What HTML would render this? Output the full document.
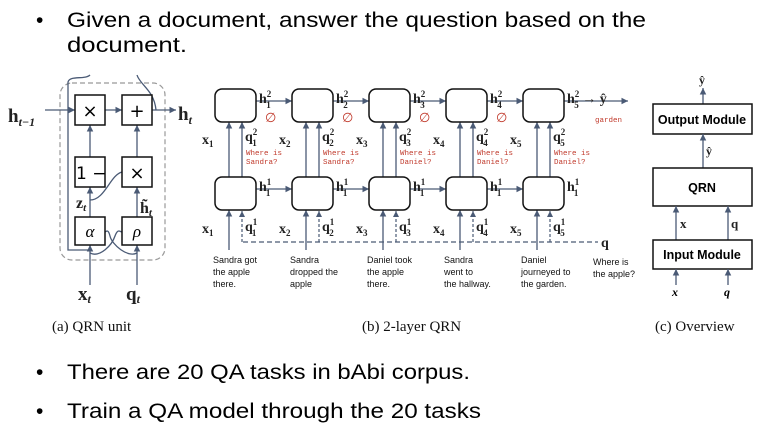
<!DOCTYPE html>
<html><head><meta charset="utf-8"><style>
html,body{margin:0;padding:0;background:#fff;}
svg{display:block;}
.b{font-family:"Liberation Sans",sans-serif;font-size:21px;fill:#000;}
.s{font-family:"Liberation Serif",serif;font-weight:bold;fill:#222;}
.cap{font-family:"Liberation Serif",serif;font-size:15px;fill:#111;}
.m{font-family:"Liberation Mono",monospace;font-size:7.5px;fill:#c0392b;}
.t{font-family:"Liberation Sans",sans-serif;font-size:9px;fill:#111;}
.ln{stroke:#4a5a75;stroke-width:1.3;fill:none;}
.bx{fill:#fff;stroke:#111;stroke-width:1.5;}
.e{font-size:13px;fill:#c0392b;font-family:"DejaVu Sans",sans-serif;}
</style></head><body>
<svg width="769" height="430" viewBox="0 0 769 430" xmlns="http://www.w3.org/2000/svg">
<defs><marker id="a" markerWidth="6" markerHeight="6" refX="5" refY="3" orient="auto"><path d="M0,0.5 L5,3 L0,5.5z" fill="#4a5a75"/></marker></defs>
<text class="b" x="36" y="27">•</text>
<text class="b" x="67" y="27" textLength="579" lengthAdjust="spacingAndGlyphs">Given a document, answer the question based on the</text>
<text class="b" x="67" y="52" textLength="120" lengthAdjust="spacingAndGlyphs">document.</text>
<text class="b" x="36" y="379">•</text>
<text class="b" x="67" y="379" textLength="403" lengthAdjust="spacingAndGlyphs">There are 20 QA tasks in bAbi corpus.</text>
<text class="b" x="36" y="418">•</text>
<text class="b" x="67" y="418" textLength="414" lengthAdjust="spacingAndGlyphs">Train a QA model through the 20 tasks</text>

<!-- (a) QRN unit -->
<rect x="60" y="83" width="105" height="177" rx="12" fill="none" stroke="#999" stroke-width="1.2" stroke-dasharray="5,3"/>
<line class="ln" x1="45" y1="110" x2="75" y2="110" marker-end="url(#a)"/>
<line class="ln" x1="105" y1="110" x2="122" y2="110" marker-end="url(#a)"/>
<line class="ln" x1="152" y1="110" x2="176" y2="110" marker-end="url(#a)"/>
<line class="ln" x1="90" y1="157" x2="90" y2="125" marker-end="url(#a)"/>
<line class="ln" x1="137" y1="157" x2="137" y2="125" marker-end="url(#a)"/>
<line class="ln" x1="90" y1="217" x2="90" y2="187" marker-end="url(#a)"/>
<line class="ln" x1="137" y1="217" x2="137" y2="187" marker-end="url(#a)"/>
<path class="ln" d="M90,200 C105,200 110,175 122,172"/>
<path class="ln" d="M90,250 L68,250 L68,82 C70,75 85,80 90,75"/>
<path class="ln" d="M156,110 C154,90 140,85 137,75"/>
<line class="ln" x1="90" y1="285" x2="90" y2="245" marker-end="url(#a)"/>
<line class="ln" x1="137" y1="285" x2="137" y2="245" marker-end="url(#a)"/>
<path class="ln" d="M90,253 C100,258 112,245 115,236 C118,228 120,232 122,232"/>
<path class="ln" d="M137,253 C128,258 112,245 110,236 C108,228 106,232 105,232"/>
<rect class="bx" x="75" y="95" width="30" height="30"/><text x="90" y="117" font-size="18" text-anchor="middle" font-family="DejaVu Sans">×</text>
<rect class="bx" x="122" y="95" width="30" height="30"/><text x="137" y="117" font-size="18" text-anchor="middle" font-family="DejaVu Sans">+</text>
<rect class="bx" x="75" y="157" width="30" height="30"/><text x="76" y="179" font-size="17" font-family="DejaVu Sans">1 −</text>
<rect class="bx" x="122" y="157" width="30" height="30"/><text x="137" y="179" font-size="18" text-anchor="middle" font-family="DejaVu Sans">×</text>
<rect class="bx" x="75" y="217" width="30" height="28"/><text x="90" y="237" font-size="17" text-anchor="middle" font-family="Liberation Serif" font-style="italic">α</text>
<rect class="bx" x="122" y="217" width="30" height="28"/><text x="137" y="237" font-size="17" text-anchor="middle" font-family="Liberation Serif" font-style="italic">ρ</text>
<text class="s" x="8" y="122" font-size="19">h<tspan font-size="12" dy="4" font-style="italic">t−1</tspan></text>
<text class="s" x="178" y="120" font-size="19">h<tspan font-size="12" dy="4" font-style="italic">t</tspan></text>
<text class="s" x="76" y="208" font-size="16">z<tspan font-size="11" dy="3" font-style="italic">t</tspan></text>
<text class="s" x="140" y="213" font-size="16">h̃<tspan font-size="11" dy="3" font-style="italic">t</tspan></text>
<text class="s" x="78" y="300" font-size="19">x<tspan font-size="12" dy="3" font-style="italic">t</tspan></text>
<text class="s" x="126" y="300" font-size="19">q<tspan font-size="12" dy="3" font-style="italic">t</tspan></text>
<text class="cap" x="52" y="331">(a) QRN unit</text>

<line x1="243" y1="242" x2="598" y2="242" stroke="#4a5a75" stroke-width="1.3" stroke-dasharray="5,3"/>
<text class="s" x="601" y="247" font-size="14">q</text>
<text class="cap" x="362" y="331">(b) 2-layer QRN</text>

<!-- (c) Overview -->
<line class="ln" x1="703" y1="104" x2="703" y2="88" marker-end="url(#a)"/>
<text class="s" x="699" y="84" font-size="12">ŷ</text>
<rect x="653" y="104" width="99" height="30" fill="#fff" stroke="#111" stroke-width="1.5"/>
<text x="702" y="124" font-size="12.5" font-weight="bold" text-anchor="middle" font-family="Liberation Sans">Output Module</text>
<line class="ln" x1="703" y1="168" x2="703" y2="134" marker-end="url(#a)"/>
<text class="s" x="706" y="155" font-size="12">ŷ</text>
<rect x="653" y="168" width="99" height="38" fill="#fff" stroke="#111" stroke-width="1.5"/>
<text x="702" y="192" font-size="12.5" font-weight="bold" text-anchor="middle" font-family="Liberation Sans">QRN</text>
<line class="ln" x1="676" y1="240" x2="676" y2="206" marker-end="url(#a)"/>
<line class="ln" x1="728" y1="240" x2="728" y2="206" marker-end="url(#a)"/>
<text class="s" x="680" y="228" font-size="13">x</text>
<text class="s" x="731" y="228" font-size="13">q</text>
<rect x="653" y="240" width="99" height="29" fill="#fff" stroke="#111" stroke-width="1.5"/>
<text x="702" y="259" font-size="12.5" font-weight="bold" text-anchor="middle" font-family="Liberation Sans">Input Module</text>
<line class="ln" x1="676" y1="285" x2="676" y2="269" marker-end="url(#a)"/>
<line class="ln" x1="728" y1="285" x2="728" y2="269" marker-end="url(#a)"/>
<text x="672" y="296" font-size="12" font-weight="bold" font-style="italic" font-family="Liberation Serif">x</text>
<text x="724" y="296" font-size="12" font-weight="bold" font-style="italic" font-family="Liberation Serif">q</text>
<text class="cap" x="655" y="331">(c) Overview</text>

<g transform="translate(215,0)">
<line class="ln" x1="40" y1="101" x2="77" y2="101" marker-end="url(#a)"/>
<line class="ln" x1="40" y1="189" x2="77" y2="189" marker-end="url(#a)"/>
<line class="ln" x1="14" y1="178" x2="14" y2="122" marker-end="url(#a)"/>
<line class="ln" x1="27" y1="178" x2="27" y2="122" marker-end="url(#a)"/>
<line class="ln" x1="14" y1="250" x2="14" y2="210" marker-end="url(#a)"/>
<line x1="27" y1="242" x2="27" y2="211" stroke="#4a5a75" stroke-width="1.2" stroke-dasharray="3,2" marker-end="url(#a)"/>
<rect class="bx" x="0" y="89" width="41" height="33" rx="7"/>
<rect class="bx" x="0" y="177" width="41" height="33" rx="7"/>
<text class="s" x="44" y="103" font-size="14">h<tspan font-size="9" dy="-6">2</tspan><tspan font-size="9" dx="-5" dy="11">1</tspan></text>
<text class="e" x="50" y="122">∅</text>
<text class="s" x="-13" y="144" font-size="14">x<tspan font-size="9" dy="3">1</tspan></text>
<text class="s" x="30" y="141" font-size="14">q<tspan font-size="9" dy="-6">2</tspan><tspan font-size="9" dx="-5" dy="11">1</tspan></text>
<text class="m" x="31" y="155">Where is</text><text class="m" x="31" y="164">Sandra?</text>
<text class="s" x="44" y="191" font-size="14">h<tspan font-size="9" dy="-6">1</tspan><tspan font-size="9" dx="-5" dy="11">1</tspan></text>
<text class="s" x="-13" y="233" font-size="14">x<tspan font-size="9" dy="3">1</tspan></text>
<text class="s" x="30" y="231" font-size="14">q<tspan font-size="9" dy="-6">1</tspan><tspan font-size="9" dx="-5" dy="11">1</tspan></text>
<text class="t" x="-2" y="263">Sandra got</text><text class="t" x="-2" y="275">the apple</text><text class="t" x="-2" y="287">there.</text>
</g>
<g transform="translate(292,0)">
<line class="ln" x1="40" y1="101" x2="77" y2="101" marker-end="url(#a)"/>
<line class="ln" x1="40" y1="189" x2="77" y2="189" marker-end="url(#a)"/>
<line class="ln" x1="14" y1="178" x2="14" y2="122" marker-end="url(#a)"/>
<line class="ln" x1="27" y1="178" x2="27" y2="122" marker-end="url(#a)"/>
<line class="ln" x1="14" y1="250" x2="14" y2="210" marker-end="url(#a)"/>
<line x1="27" y1="242" x2="27" y2="211" stroke="#4a5a75" stroke-width="1.2" stroke-dasharray="3,2" marker-end="url(#a)"/>
<rect class="bx" x="0" y="89" width="41" height="33" rx="7"/>
<rect class="bx" x="0" y="177" width="41" height="33" rx="7"/>
<text class="s" x="44" y="103" font-size="14">h<tspan font-size="9" dy="-6">2</tspan><tspan font-size="9" dx="-5" dy="11">2</tspan></text>
<text class="e" x="50" y="122">∅</text>
<text class="s" x="-13" y="144" font-size="14">x<tspan font-size="9" dy="3">2</tspan></text>
<text class="s" x="30" y="141" font-size="14">q<tspan font-size="9" dy="-6">2</tspan><tspan font-size="9" dx="-5" dy="11">2</tspan></text>
<text class="m" x="31" y="155">Where is</text><text class="m" x="31" y="164">Sandra?</text>
<text class="s" x="44" y="191" font-size="14">h<tspan font-size="9" dy="-6">1</tspan><tspan font-size="9" dx="-5" dy="11">1</tspan></text>
<text class="s" x="-13" y="233" font-size="14">x<tspan font-size="9" dy="3">2</tspan></text>
<text class="s" x="30" y="231" font-size="14">q<tspan font-size="9" dy="-6">1</tspan><tspan font-size="9" dx="-5" dy="11">2</tspan></text>
<text class="t" x="-2" y="263">Sandra</text><text class="t" x="-2" y="275">dropped the</text><text class="t" x="-2" y="287">apple</text>
</g>
<g transform="translate(369,0)">
<line class="ln" x1="40" y1="101" x2="77" y2="101" marker-end="url(#a)"/>
<line class="ln" x1="40" y1="189" x2="77" y2="189" marker-end="url(#a)"/>
<line class="ln" x1="14" y1="178" x2="14" y2="122" marker-end="url(#a)"/>
<line class="ln" x1="27" y1="178" x2="27" y2="122" marker-end="url(#a)"/>
<line class="ln" x1="14" y1="250" x2="14" y2="210" marker-end="url(#a)"/>
<line x1="27" y1="242" x2="27" y2="211" stroke="#4a5a75" stroke-width="1.2" stroke-dasharray="3,2" marker-end="url(#a)"/>
<rect class="bx" x="0" y="89" width="41" height="33" rx="7"/>
<rect class="bx" x="0" y="177" width="41" height="33" rx="7"/>
<text class="s" x="44" y="103" font-size="14">h<tspan font-size="9" dy="-6">2</tspan><tspan font-size="9" dx="-5" dy="11">3</tspan></text>
<text class="e" x="50" y="122">∅</text>
<text class="s" x="-13" y="144" font-size="14">x<tspan font-size="9" dy="3">3</tspan></text>
<text class="s" x="30" y="141" font-size="14">q<tspan font-size="9" dy="-6">2</tspan><tspan font-size="9" dx="-5" dy="11">3</tspan></text>
<text class="m" x="31" y="155">Where is</text><text class="m" x="31" y="164">Daniel?</text>
<text class="s" x="44" y="191" font-size="14">h<tspan font-size="9" dy="-6">1</tspan><tspan font-size="9" dx="-5" dy="11">1</tspan></text>
<text class="s" x="-13" y="233" font-size="14">x<tspan font-size="9" dy="3">3</tspan></text>
<text class="s" x="30" y="231" font-size="14">q<tspan font-size="9" dy="-6">1</tspan><tspan font-size="9" dx="-5" dy="11">3</tspan></text>
<text class="t" x="-2" y="263">Daniel took</text><text class="t" x="-2" y="275">the apple</text><text class="t" x="-2" y="287">there.</text>
</g>
<g transform="translate(446,0)">
<line class="ln" x1="40" y1="101" x2="77" y2="101" marker-end="url(#a)"/>
<line class="ln" x1="40" y1="189" x2="77" y2="189" marker-end="url(#a)"/>
<line class="ln" x1="14" y1="178" x2="14" y2="122" marker-end="url(#a)"/>
<line class="ln" x1="27" y1="178" x2="27" y2="122" marker-end="url(#a)"/>
<line class="ln" x1="14" y1="250" x2="14" y2="210" marker-end="url(#a)"/>
<line x1="27" y1="242" x2="27" y2="211" stroke="#4a5a75" stroke-width="1.2" stroke-dasharray="3,2" marker-end="url(#a)"/>
<rect class="bx" x="0" y="89" width="41" height="33" rx="7"/>
<rect class="bx" x="0" y="177" width="41" height="33" rx="7"/>
<text class="s" x="44" y="103" font-size="14">h<tspan font-size="9" dy="-6">2</tspan><tspan font-size="9" dx="-5" dy="11">4</tspan></text>
<text class="e" x="50" y="122">∅</text>
<text class="s" x="-13" y="144" font-size="14">x<tspan font-size="9" dy="3">4</tspan></text>
<text class="s" x="30" y="141" font-size="14">q<tspan font-size="9" dy="-6">2</tspan><tspan font-size="9" dx="-5" dy="11">4</tspan></text>
<text class="m" x="31" y="155">Where is</text><text class="m" x="31" y="164">Daniel?</text>
<text class="s" x="44" y="191" font-size="14">h<tspan font-size="9" dy="-6">1</tspan><tspan font-size="9" dx="-5" dy="11">1</tspan></text>
<text class="s" x="-13" y="233" font-size="14">x<tspan font-size="9" dy="3">4</tspan></text>
<text class="s" x="30" y="231" font-size="14">q<tspan font-size="9" dy="-6">1</tspan><tspan font-size="9" dx="-5" dy="11">4</tspan></text>
<text class="t" x="-2" y="263">Sandra</text><text class="t" x="-2" y="275">went to</text><text class="t" x="-2" y="287">the hallway.</text>
</g>
<g transform="translate(523,0)">
<line class="ln" x1="40" y1="101" x2="105" y2="101" marker-end="url(#a)"/>
<line class="ln" x1="14" y1="178" x2="14" y2="122" marker-end="url(#a)"/>
<line class="ln" x1="27" y1="178" x2="27" y2="122" marker-end="url(#a)"/>
<line class="ln" x1="14" y1="250" x2="14" y2="210" marker-end="url(#a)"/>
<line x1="27" y1="242" x2="27" y2="211" stroke="#4a5a75" stroke-width="1.2" stroke-dasharray="3,2" marker-end="url(#a)"/>
<rect class="bx" x="0" y="89" width="41" height="33" rx="7"/>
<rect class="bx" x="0" y="177" width="41" height="33" rx="7"/>
<text class="s" x="44" y="103" font-size="14">h<tspan font-size="9" dy="-6">2</tspan><tspan font-size="9" dx="-5" dy="11">5</tspan><tspan dy="-5"> → ŷ</tspan></text>
<text class="m" x="72" y="122">garden</text>
<text class="s" x="-13" y="144" font-size="14">x<tspan font-size="9" dy="3">5</tspan></text>
<text class="s" x="30" y="141" font-size="14">q<tspan font-size="9" dy="-6">2</tspan><tspan font-size="9" dx="-5" dy="11">5</tspan></text>
<text class="m" x="31" y="155">Where is</text><text class="m" x="31" y="164">Daniel?</text>
<text class="s" x="44" y="191" font-size="14">h<tspan font-size="9" dy="-6">1</tspan><tspan font-size="9" dx="-5" dy="11">1</tspan></text>
<text class="s" x="-13" y="233" font-size="14">x<tspan font-size="9" dy="3">5</tspan></text>
<text class="s" x="30" y="231" font-size="14">q<tspan font-size="9" dy="-6">1</tspan><tspan font-size="9" dx="-5" dy="11">5</tspan></text>
<text class="t" x="-2" y="263">Daniel</text><text class="t" x="-2" y="275">journeyed to</text><text class="t" x="-2" y="287">the garden.</text>
</g>
<text class="t" x="593" y="265">Where is</text><text class="t" x="593" y="277">the apple?</text>
</svg>
</body></html>
